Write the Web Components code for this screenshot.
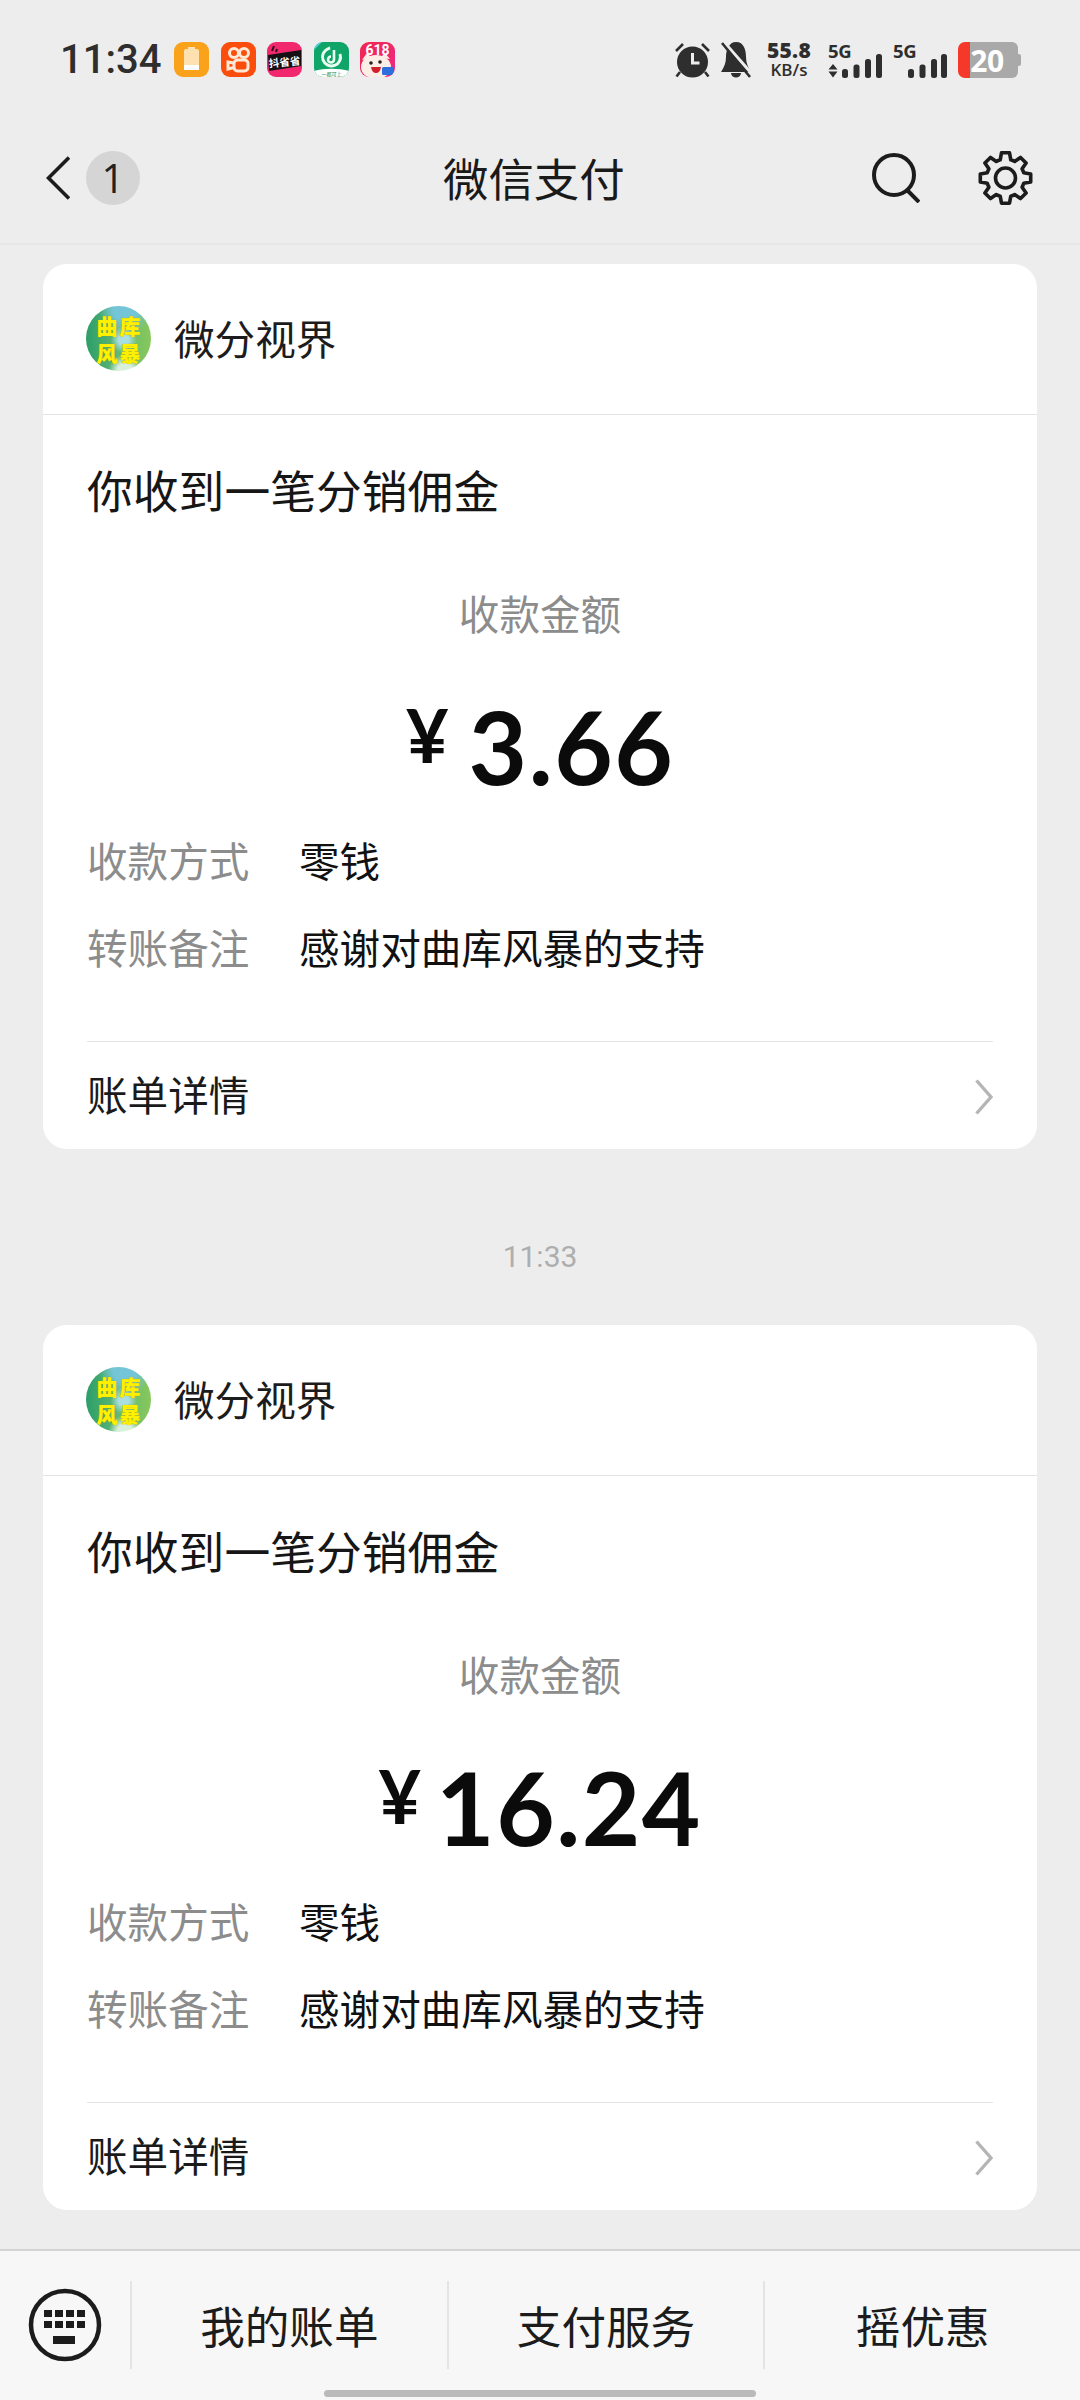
<!DOCTYPE html>
<html lang="zh"><head><meta charset="utf-8"><title>微信支付</title>
<style>
html,body{margin:0;padding:0;background:#ededed}
body{width:1080px;height:2400px;overflow:hidden;font-family:"Noto Sans CJK SC","Noto Sans",sans-serif;color:#1a1a1a}
pay-page{display:flex}
</style></head><body>
<pay-page>
  <status-bar slot="top"></status-bar>
  <nav-bar slot="top" title="微信支付"></nav-bar>
  <pay-card amount="3.66" gap="20" name="微分视界" heading="你收到一笔分销佣金">
    <detail-row label="收款方式">零钱</detail-row>
    <detail-row label="转账备注">感谢对曲库风暴的支持</detail-row>
  </pay-card>
  <time-stamp>11:33</time-stamp>
  <pay-card amount="16.24" gap="15" name="微分视界" heading="你收到一笔分销佣金">
    <detail-row label="收款方式">零钱</detail-row>
    <detail-row label="转账备注">感谢对曲库风暴的支持</detail-row>
  </pay-card>
  <bottom-bar slot="bottom"></bottom-bar>
</pay-page>
<script>
const CJK='"Noto Sans CJK SC","Noto Sans",sans-serif';
function def(name,html){
  customElements.define(name,class extends HTMLElement{
    constructor(){super();const r=this.attachShadow({mode:'open'});r.innerHTML=typeof html==='function'?html(this):html;}
  });
}
def('pay-page',`<style>
:host{display:flex;flex-direction:column;width:1080px;height:2400px}
main{flex:1;padding:19px 43px 0;display:flex;flex-direction:column;min-height:0}
</style><slot name="top"></slot><main><slot></slot></main><slot name="bottom"></slot>`);

def('status-bar',`<style>
:host{display:flex;height:80px;box-sizing:border-box;padding:42px 0 0 60px;color:#2b2b2b;align-items:flex-start;font-family:"Open Sans",sans-serif}
.t{font:500 40px/35px Roboto,sans-serif;width:98px;color:#2e2e2e;white-space:nowrap}
.apps{display:flex;gap:11.5px;margin-left:16px}
.r{display:flex;margin-left:auto;margin-right:59px;align-items:flex-start}
svg{display:block}
.a{width:35px;height:35px;border-radius:9px;overflow:hidden;position:relative;flex:none}
.sp{width:46px;margin-left:15px;margin-top:-3px;text-align:center;font-weight:700;color:#2e2e2e}
.sp b{display:block;font-size:21px;line-height:22px;letter-spacing:.3px}
.sp i{display:block;font-style:normal;font-size:17px;line-height:18px;font-weight:600}
.sig{position:relative;width:54px;height:36px;margin-left:16px}
.sig span{display:block;font-weight:700;font-size:18.5px;line-height:18px;letter-spacing:-.3px;color:#2e2e2e}
.sig svg{position:absolute;left:0;top:0}
.bat{width:63px;height:36px;margin-left:11px;position:relative;flex:none}
.bat span{position:absolute;left:12px;top:0;width:34px;text-align:center;color:#fff;font:700 30px/37px "Open Sans",sans-serif;letter-spacing:-.5px}
</style>
<span class="t">11:34</span>
<div class="apps">
 <div class="a" style="background:#f9a21a"><svg width="35" height="35"><rect x="10" y="7" width="15" height="21" rx="2" fill="#fde2b0"/><rect x="14" y="5" width="7" height="3" fill="#fde2b0"/><rect x="10" y="23" width="15" height="5" fill="#fff"/></svg></div>
 <div class="a" style="background:#fb4d0c"><svg width="35" height="35" fill="none" stroke="#ffe9d6" stroke-width="3"><circle cx="13" cy="11" r="4.500"/><circle cx="23" cy="11" r="4.500"/><rect x="13" y="18" width="14" height="11" rx="3.500"/><path d="M13 21l-6 -1v7l6-1.500"/></svg></div>
 <div class="a" style="background:#f2286e"><svg width="35" height="35"><path d="M1 13L34 8V24L2 29Z" fill="#161015"/><path d="M5 9l2 -5M9 10l1-3" stroke="#2a0f18" stroke-width="2"/><text x="17.500" y="24" text-anchor="middle" font-size="10.500" font-weight="700" fill="#fff" font-family='"Noto Sans CJK SC"' transform="rotate(-6 17 20)">抖省省</text></svg></div>
 <div class="a" style="background:#0fa468"><svg width="35" height="35" fill="none"><path d="M0 0H8L0 8Z" fill="#4fd1e3"/><path d="M0 29C10 26 25 26 35 29V35H0Z" fill="#fff"/><circle cx="17.500" cy="15" r="9" stroke="#e8fff2" stroke-width="3" stroke-dasharray="44 13" transform="rotate(-20 17.500 15)"/><path d="M20 8V17.500A3 3 0 1 1 17 14.500" stroke="#e8fff2" stroke-width="2.600"/><text x="17.500" y="33.500" text-anchor="middle" font-size="5" fill="#0a8a55" font-family='"Noto Sans CJK SC"'>一都可上</text></svg></div>
 <div class="a" style="background:linear-gradient(135deg,#f0264e,#ee2a86)"><svg width="35" height="35"><ellipse cx="16" cy="25" rx="15" ry="12" fill="#fbeee6"/><path d="M2 18l5-7 5 5zM30 17l-5-6-5 5z" fill="#fbeee6"/><circle cx="11" cy="21" r="1.800" fill="#222"/><circle cx="20" cy="20" r="1.800" fill="#222"/><path d="M11 25h10q-1 6-5 6t-5-6z" fill="#d3202d"/><rect x="22" y="25" width="12" height="8" rx="1.500" fill="#2d6fdc"/><text x="17.500" y="13" text-anchor="middle" font-size="14" font-weight="700" fill="#fff" font-family="Roboto">618</text></svg></div>
</div>
<div class="r">
 <svg width="37" height="36" viewBox="0 0 37 36"><path d="M2 9l7-7M35 9l-7-7" stroke="#2e2e2e" stroke-width="2.600"/><path d="M6 30l-3.500 4.500M31 30l3.500 4.500" stroke="#2e2e2e" stroke-width="2.600"/><circle cx="18.500" cy="20" r="15.500" fill="#2e2e2e"/><path d="M18.500 11v10h7" stroke="#ededed" stroke-width="3" fill="none"/></svg>
 <svg style="margin-left:10px" width="30" height="36" viewBox="0 0 30 36"><path d="M15 0C23 0 25 8 25 15C25 21 27 25 30 30H0C3 25 5 21 5 15C5 8 8 0 15 0ZM10 31h10a5 4.500 0 0 1-10 0Z" fill="#2e2e2e"/><path d="M3 0L31 32" stroke="#ededed" stroke-width="3"/><path d="M1 1L29 35" stroke="#2e2e2e" stroke-width="2.600"/></svg>
 <div class="sp"><b>55.8</b><i>KB/s</i></div>
 <div class="sig"><span>5G</span><svg width="54" height="36" viewBox="0 0 54 36" fill="#2e2e2e"><path d="M5 22l4.500 5.500H.5zM.5 29.500h9L5 35.500z"/><rect x="14" y="27" width="6" height="9" rx="2.500"/><rect x="25.500" y="22.500" width="6" height="13.500" rx="2.500"/><rect x="37" y="17" width="6" height="19" rx="2.500"/><rect x="48" y="12" width="6" height="24" rx="2.500"/></svg></div>
 <div class="sig" style="margin-left:11px;"><span>5G</span><svg width="54" height="36" viewBox="0 0 54 36" fill="#2e2e2e"><rect x="15" y="27" width="6" height="9" rx="2.500"/><rect x="26.500" y="22.500" width="6" height="13.500" rx="2.500"/><rect x="38" y="17" width="6" height="19" rx="2.500"/><rect x="48" y="12" width="6" height="24" rx="2.500"/></svg></div>
 <div class="bat"><svg width="63" height="36" viewBox="0 0 63 36"><path d="M12 0H54a6 6 0 0 1 6 6V30a6 6 0 0 1-6 6H12Z" fill="#a9a9a9"/><path d="M12 0H7a7 7 0 0 0-7 7V29a7 7 0 0 0 7 7H12Z" fill="#f6382a"/><path d="M60 12h1a2 2 0 0 1 2 2v8a2 2 0 0 1-2 2h-1Z" fill="#a9a9a9"/></svg><span>20</span></div>
</div>`);

function gearPath(){
  const cx=27.5,cy=27,teeth=8,R=25.5,r=19;let d='';
  for(let i=0;i<teeth;i++){
    const a=i*Math.PI/4-Math.PI/2,s=Math.PI/4;
    const p=(rad,ang)=>[(cx+rad*Math.cos(ang)).toFixed(1),(cy+rad*Math.sin(ang)).toFixed(1)].join(' ');
    d+=(i?'L':'M')+p(r,a-s*.36)+'L'+p(R,a-s*.2)+'L'+p(R,a+s*.2)+'L'+p(r,a+s*.36)+'A'+r+' '+r+' 0 0 1 '+p(r,a+s*.64);
  }
  return d+'Z';
}
def('nav-bar',h=>`<style>
:host{display:flex;align-items:center;height:165px;box-sizing:border-box;border-bottom:2px solid #e6e6e6;padding:32px 47px 0 46px}
.back{flex:none}
.badge{width:54px;height:54px;border-radius:50%;background:#d5d5d5;margin-left:16px;display:flex;align-items:center;justify-content:center;font:400 40px/1 "Open Sans",sans-serif;color:#222;flex:none}
h1{margin:0 0 0 303px;font:400 45.4px/1 ${CJK};color:#1a1a1a;width:184px;white-space:nowrap}
.ic{margin-left:auto;display:flex;gap:58px;align-items:center}
svg{display:block}
</style>
<svg class="back" width="24" height="44" viewBox="0 0 24 44" fill="none"><path d="M23 1.500L2.500 22L23 42.500" stroke="#1c1c1c" stroke-width="3.600"/></svg>
<div class="badge">1</div>
<h1>${h.getAttribute('title')}</h1>
<div class="ic">
<svg width="48" height="50" viewBox="0 0 48 50" fill="none" stroke="#1c1c1c" stroke-width="4"><circle cx="22" cy="22" r="20"/><path d="M35 37L47 49"/></svg>
<svg width="55" height="54" viewBox="0 0 55 54" fill="none" stroke="#1c1c1c" stroke-width="3.600" stroke-linejoin="round"><path d="${gearPath()}"/><circle cx="27.500" cy="27" r="10"/></svg>
</div>`);

def('co-avatar',`<style>
:host{display:grid;grid-template-columns:22px 22px;grid-template-rows:24px 24px;gap:3px 1px;place-content:center;place-items:center;width:65px;height:65px;border-radius:50%;overflow:hidden;flex:none;
background:radial-gradient(circle at 58% 52%,#a9dfe0 0 10%,transparent 26%),radial-gradient(circle at 60% 100%,#d9f0dc 0 10%,transparent 22%),radial-gradient(circle at 60% 4%,#74c5d8 0 16%,transparent 36%),linear-gradient(90deg,#2b9e68,#5fb876 50%,#88c85a);
color:#fff000;font:900 21px/24px "Noto Sans CJK SC",sans-serif;text-shadow:0 0 1px #b89a00}
span{display:block}
</style><span>曲</span><span>库</span><span>风</span><span>暴</span>`);

def('pay-card',h=>`<style>
:host{display:block;background:#fff;border-radius:24px;height:885px;box-sizing:border-box;flex:none;color:#191919}
.head{height:151px;box-sizing:border-box;border-bottom:1px solid #e4e4e4;display:flex;align-items:center;padding:0 0 1px 43px;gap:23px}
.name{font:400 40.6px/1 ${CJK};color:#1c1c1c}
.body{padding:0 44px 0 44px}
h2{margin:0;font:400 45.8px/1 ${CJK};padding-top:52px;height:46px;color:#161616;box-sizing:content-box}
.lab{text-align:center;font:400 40.6px/1 ${CJK};color:#8c8c8c;margin-top:80px}
.amt{display:flex;justify-content:center;align-items:flex-start;height:100px;margin-top:70px;color:#0b0b0b}
.y{font:700 74px/70px Lato,sans-serif;margin-right:${h.getAttribute('gap')}px;margin-top:-4px}
.n{font:700 101px/100px Lato,sans-serif;letter-spacing:1.5px;margin-top:-8px}
.rows{margin-top:13px;height:224px}
.foot{border-top:1px solid #e4e4e4;height:110px;display:flex;align-items:center;justify-content:space-between;font:400 40.6px/1 ${CJK};color:#1a1a1a}
.foot span{padding-bottom:5px}
svg{display:block}
</style>
<div class="head"><co-avatar></co-avatar><span class="name">${h.getAttribute('name')}</span></div>
<div class="body">
<h2>${h.getAttribute('heading')}</h2>
<div class="lab">收款金额</div>
<div class="amt"><span class="y">¥</span><span class="n">${h.getAttribute('amount')}</span></div>
<div class="rows"><slot></slot></div>
<div class="foot"><span>账单详情</span><svg width="18" height="36" viewBox="0 0 18 36" fill="none"><path d="M1.500 1.500L16 18L1.500 34.500" stroke="#b5b5b5" stroke-width="3.400"/></svg></div>
</div>`);

def('detail-row',h=>`<style>
:host{display:flex;height:87px;align-items:center;font:400 40.6px/1 ${CJK};color:#111}
.l{width:212px;color:#8c8c8c;flex:none}
</style><span class="l">${h.getAttribute('label')}</span><span><slot></slot></span>`);

def('time-stamp',`<style>
:host{display:block;text-align:center;font:400 30px/1 Roboto,sans-serif;color:#aeaeae;flex:none;padding:93px 0 53px}
</style><slot></slot>`);

def('bottom-bar',`<style>
:host{display:flex;flex:none;height:151px;box-sizing:border-box;background:#f7f7f7;border-top:2px solid #d4d4d4;position:relative;padding-top:30px;align-items:flex-start}
.kb{width:130px;height:88px;display:flex;align-items:center;padding-left:28px;box-sizing:border-box;flex:none}
.t{flex:1;height:88px;border-left:2px solid #e4e4e4;box-sizing:border-box;display:flex;align-items:center;justify-content:center;font:400 44.6px/1 ${CJK};color:#1c1c1c}
.home{position:absolute;left:324px;top:139px;width:432px;height:7px;background:#bababa;border-radius:4px}
svg{display:block}
</style>
<div class="kb"><svg width="74" height="74" viewBox="0 0 74 74"><circle cx="37" cy="37" r="34" fill="none" stroke="#1c1c1c" stroke-width="4.500"/><g fill="#1c1c1c"><rect x="16" y="22" width="8" height="7"/><rect x="27" y="22" width="8" height="7"/><rect x="38" y="22" width="8" height="7"/><rect x="49" y="22" width="8" height="7"/><rect x="16" y="33" width="8" height="7"/><rect x="27" y="33" width="8" height="7"/><rect x="38" y="33" width="8" height="7"/><rect x="49" y="33" width="8" height="7"/><rect x="25" y="48" width="22" height="8"/></g></svg></div>
<div class="t">我的账单</div><div class="t">支付服务</div><div class="t">摇优惠</div>
<div class="home"></div>`);
</script>
</body></html>
